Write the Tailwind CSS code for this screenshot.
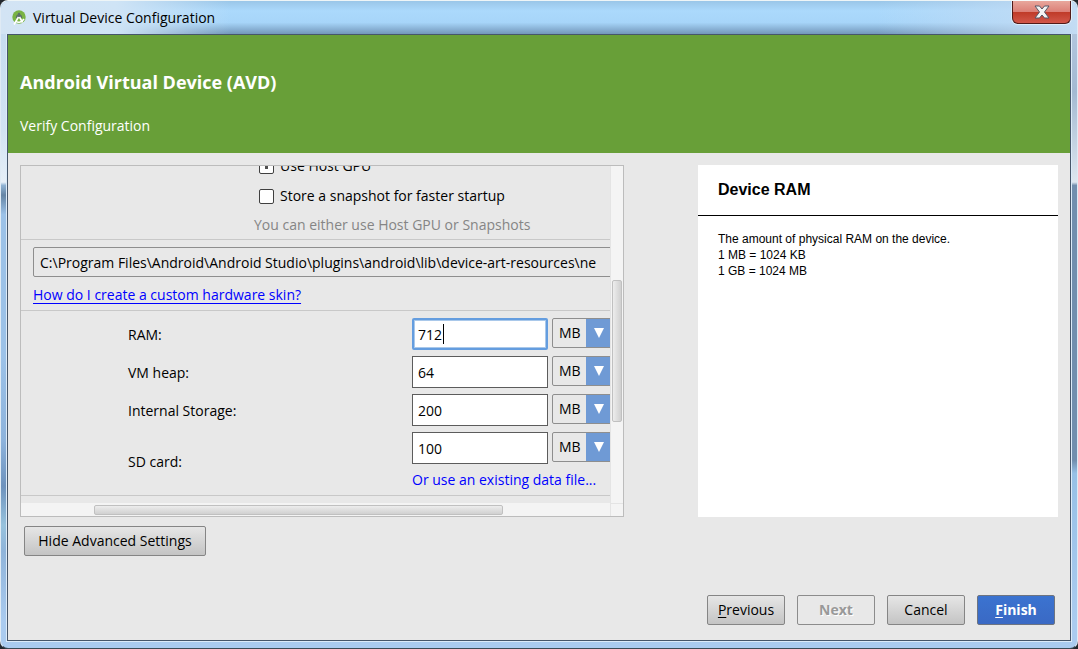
<!DOCTYPE html>
<html lang="en">
<head>
<meta charset="utf-8">
<title>Virtual Device Configuration</title>
<script src="https://cdn.jsdelivr.net/npm/@tailwindcss/browser@4"></script>
</head>
<body class="min-h-screen bg-[#23282e] font-['Open_Sans','Noto_Sans',sans-serif] text-sm text-black">
<div class="flex min-h-screen flex-col rounded-lg border border-t-[#eef5f7] border-x-[#dfeaf4] border-b-[#3b4a55] bg-[linear-gradient(to_bottom,#c3daf0_0,#d2e3f3_20%,#e6eff7_28%,#8fb2d3_28.5%,#6585a5_30%,#9cc2e8_33%,#9cc2e8_55%,#8db3dc_68%,#6d92bd_75%,#97c2dd_81%,#8fb4da_85%,#aacbef_96%),linear-gradient(to_bottom,#b9cde4_0,#a3b9d2_14%,#dde6ef_28%,#718eae_28.5%,#718eae_71%,#97c0e6_73%,#aacbef_96%),linear-gradient(#aacbef,#aacbef)] bg-size-[8px_100%,8px_100%,100%_100%] bg-position-[left_top,right_top,left_top] bg-no-repeat">
  <header class="relative flex h-[33px] shrink-0 items-center rounded-t-lg bg-[linear-gradient(to_bottom,#9ac6e8,#abd9fc_30%,#a7d5f9_65%,#7397ba)] pl-2.5">
    <div class="absolute inset-y-0 left-0 w-[230px] rounded-tl-lg bg-linear-to-r from-[#d3e4f4] via-[#cfe4f6] to-transparent"></div>
    <div class="absolute inset-y-0 right-0 w-[200px] rounded-tr-lg bg-linear-to-l from-[#c3dcf4] to-transparent"></div>
    <svg class="relative size-4" viewBox="0 0 16 16" aria-hidden="true">
      <circle cx="8" cy="7" r="6.700" fill="#79b344"/>
      <path d="M4.800 8a3.200 3.800 0 0 1 6.400 0z" fill="#5c6f6a"/>
      <circle cx="8" cy="4" r="1.200" fill="#5c6f6a"/>
      <path d="M7.500 7 3 14.500M8.500 7l3 5.500M5 11.500c2.500 1.500 6 .5 8-2.500" stroke="#fff" stroke-width="1.600" fill="none"/>
    </svg>
    <h1 class="relative ml-1.5">Virtual Device Configuration</h1>
    <button aria-label="Close" class="absolute top-0 right-1.5 flex h-[23px] w-[59px] items-center justify-center rounded-b-md border border-t-0 border-[#521b19] bg-[linear-gradient(to_bottom,#e8a79d,#dc8078_48%,#bf3a28_50%,#d2574a)] shadow-[0_0_0_1px_#ffffff80]">
      <svg class="h-3.5 w-4" viewBox="0 0 16 14" aria-hidden="true"><path d="M1 1h4.500L8 4l2.500-3H15l-4.500 6L15 13h-4.500L8 10l-2.500 3H1l4.500-6z" fill="#f4f4f4" stroke="#535666" stroke-width="1"/></svg>
    </button>
  </header>
  <div class="mx-1.5 mb-[7px] flex grow flex-col border border-[#46566a] bg-[#e8e8e8] outline outline-[#dcebf9]">
    <div class="flex h-[118px] shrink-0 flex-col bg-[#689f38] px-3 pt-[35px] text-white">
      <h2 class="text-lg leading-6 font-bold">Android Virtual Device (AVD)</h2>
      <p class="mt-[22px] leading-5">Verify Configuration</p>
    </div>
    <main class="flex justify-between px-3 pt-3">
      <section class="flex h-[352px] w-[604px] flex-col border border-[#bcbcbc]" aria-label="Advanced settings">
        <div class="flex min-h-0 grow">
          <div class="flex min-w-0 grow flex-col overflow-hidden">
            <div class="flex h-[74px] shrink-0 flex-col justify-end border-b border-[#c8c8c8]">
              <label class="ml-[238px] flex h-[30px] shrink-0 items-center gap-1.5"><input type="checkbox" checked class="size-[15px] appearance-none rounded-xs border border-[#404040] bg-white bg-[linear-gradient(#505050,#505050)] bg-size-[3px_5px] bg-center bg-no-repeat">Use Host GPU</label>
              <label class="ml-[238px] flex h-[30px] shrink-0 items-center gap-1.5"><input type="checkbox" class="size-[15px] appearance-none rounded-xs border border-[#404040] bg-white">Store a snapshot for faster startup</label>
              <p class="ml-[233px] h-7 shrink-0 leading-7 text-[#858585]">You can either use Host GPU or Snapshots</p>
            </div>
            <div class="h-[71px] shrink-0 border-b border-[#c8c8c8] pt-[7px] pl-3">
              <input aria-label="Custom skin path" readonly value="C:\Program Files\Android\Android Studio\plugins\android\lib\device-art-resources\ne" class="block h-[30px] w-[640px] rounded-xs border border-[#8e8e8e] px-1.5">
              <a href="#" class="mt-1.5 inline-block leading-6 text-[#0000ff] underline underline-offset-3">How do I create a custom hardware skin?</a>
            </div>
            <div class="grid shrink-0 grid-cols-[284px_136px_58px] gap-y-1 border-b border-[#c8c8c8] pt-[7px] pb-[3px] pl-[107px]">
              <label for="ram" class="leading-[34px]">RAM:</label>
              <div class="relative h-8"><input id="ram" value="712" class="h-8 w-[136px] rounded-xs border-2 border-[#649ddf] bg-white px-1 ring-1 ring-[#a9c8ea] outline-none ring-inset"><span class="absolute top-1.5 left-[31px] h-5 w-px bg-black"></span></div>
              <div class="relative ml-1 h-[30px] w-[62px]"><select aria-label="RAM unit" class="h-[30px] w-[62px] appearance-none rounded-xs border border-[#8e8e8e] bg-[linear-gradient(to_right,transparent_33px,#6f9ad5_33px)] pl-1.5"><option>MB</option></select><svg class="pointer-events-none absolute top-2.5 left-[41px] h-2.5 w-3" viewBox="0 0 12 10" aria-hidden="true"><path d="M1 0h10L6 10z" fill="#fff"/></svg></div>
              <label for="heap" class="leading-[34px]">VM heap:</label>
              <input id="heap" value="64" class="h-8 w-[136px] border border-[#5c5c5c] bg-white px-[5px]">
              <div class="relative ml-1 h-[30px] w-[62px]"><select aria-label="VM heap unit" class="h-[30px] w-[62px] appearance-none rounded-xs border border-[#8e8e8e] bg-[linear-gradient(to_right,transparent_33px,#6f9ad5_33px)] pl-1.5"><option>MB</option></select><svg class="pointer-events-none absolute top-2.5 left-[41px] h-2.5 w-3" viewBox="0 0 12 10" aria-hidden="true"><path d="M1 0h10L6 10z" fill="#fff"/></svg></div>
              <label for="storage" class="leading-[34px]">Internal Storage:</label>
              <input id="storage" value="200" class="h-8 w-[136px] border border-[#5c5c5c] bg-white px-[5px]">
              <div class="relative ml-1 h-[30px] w-[62px]"><select aria-label="Internal storage unit" class="h-[30px] w-[62px] appearance-none rounded-xs border border-[#8e8e8e] bg-[linear-gradient(to_right,transparent_33px,#6f9ad5_33px)] pl-1.5"><option>MB</option></select><svg class="pointer-events-none absolute top-2.5 left-[41px] h-2.5 w-3" viewBox="0 0 12 10" aria-hidden="true"><path d="M1 0h10L6 10z" fill="#fff"/></svg></div>
              <label for="sd" class="row-span-2 self-center">SD card:</label>
              <input id="sd" value="100" class="h-8 w-[136px] border border-[#5c5c5c] bg-white px-[5px]">
              <div class="relative ml-1 h-[30px] w-[62px]"><select aria-label="SD card unit" class="h-[30px] w-[62px] appearance-none rounded-xs border border-[#8e8e8e] bg-[linear-gradient(to_right,transparent_33px,#6f9ad5_33px)] pl-1.5"><option>MB</option></select><svg class="pointer-events-none absolute top-2.5 left-[41px] h-2.5 w-3" viewBox="0 0 12 10" aria-hidden="true"><path d="M1 0h10L6 10z" fill="#fff"/></svg></div>
              <a href="#" class="col-span-2 col-start-2 leading-6 text-[#0000ff]">Or use an existing data file...</a>
            </div>
          </div>
          <div class="w-[13px] shrink-0 border-l border-[#e4e4e4] bg-[#f4f4f4] pt-[114px]"><div class="mx-px h-[142px] rounded-xs border border-[#c0c0c0] bg-linear-to-r from-[#ededed] to-[#d0d0d0]"></div></div>
        </div>
        <div class="flex h-[13px] shrink-0 bg-[#f4f4f4]">
          <div class="grow pt-0.5"><div class="ml-[73px] h-2.5 w-[409px] rounded-xs border border-[#c0c0c0] bg-linear-to-b from-[#ededed] to-[#d0d0d0]"></div></div>
          <div class="w-[13px] border-t border-l border-[#e4e4e4]"></div>
        </div>
      </section>
      <aside class="w-[360px] bg-white font-['Liberation_Sans',Arial,sans-serif]">
        <h3 class="h-[51px] border-b border-black px-5 pt-[13px] text-base leading-6 font-bold">Device RAM</h3>
        <p class="px-5 pt-[15px] text-xs leading-4">The amount of physical RAM on the device.<br>1 MB = 1024 KB<br>1 GB = 1024 MB</p>
      </aside>
    </main>
    <div class="px-4 pt-[9px]"><button class="h-[30px] w-[182px] rounded-xs border border-[#858585] bg-linear-to-b from-[#e6e6e6] to-[#c4c4c4]">Hide Advanced Settings</button></div>
    <footer class="mt-auto flex justify-end gap-3 pr-[15px] pb-[15px]">
      <button class="h-[30px] w-[78px] rounded-xs border border-[#858585] bg-linear-to-b from-[#e6e6e6] to-[#c4c4c4]"><span class="underline underline-offset-2">P</span>revious</button>
      <button disabled class="h-[30px] w-[78px] rounded-xs border border-[#8c8c8c] font-bold text-[#999] text-shadow-[1px_1px_0_#fff]">Next</button>
      <button class="h-[30px] w-[78px] rounded-xs border border-[#858585] bg-linear-to-b from-[#e6e6e6] to-[#c4c4c4]">Cancel</button>
      <button class="h-[30px] w-[78px] rounded-xs border border-[#6e7480] bg-linear-to-b from-[#3b73d0] to-[#3a69c4] font-bold text-white"><span class="underline underline-offset-2">F</span>inish</button>
    </footer>
  </div>
</div>
</body>
</html>
